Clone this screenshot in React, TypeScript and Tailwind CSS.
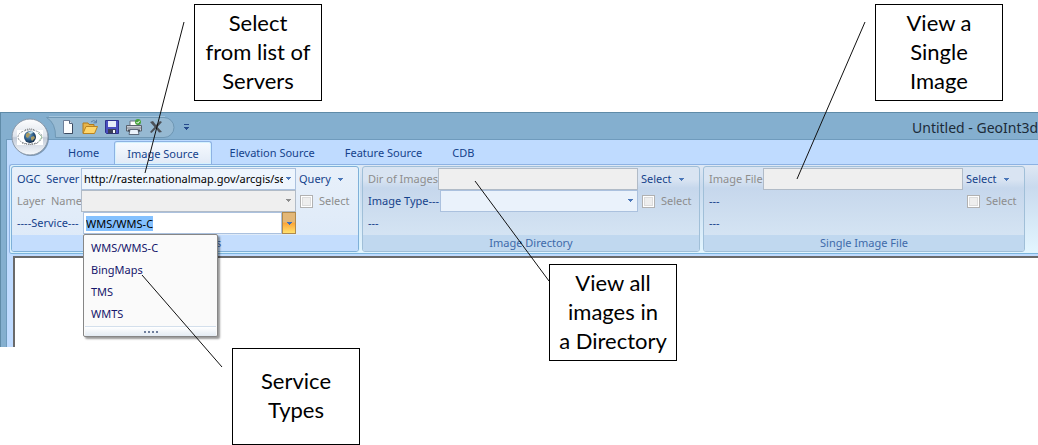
import { useEffect, useRef } from "react"
import type { ReactNode } from "react"
import clsx from "clsx"

const tabs = ["Home", "Image Source", "Elevation Source", "Feature Source", "CDB"]
const services = ["WMS/WMS-C", "BingMaps", "TMS", "WMTS"]

function Arrow({ className }: { className?: string }) {
  return (
    <svg viewBox="0 0 5 3" className={clsx("h-[3px] w-[5px] shrink-0", className)} shapeRendering="crispEdges">
      <path d="M0 0h5v1h-1v1h-1v1h-1v-1h-1v-1h-1z" fill="currentColor" />
    </svg>
  )
}

function GlobeButton() {
  return (
    <button type="button" aria-label="Application menu" className="absolute top-1 left-[9px] z-10 size-10">
      <svg viewBox="0 0 40 40" className="size-10">
        <defs>
          <linearGradient id="orb" x1="0" y1="0" x2="0" y2="1">
            <stop offset="0" stopColor="#fdfdfe" />
            <stop offset=".48" stopColor="#dfe4ec" />
            <stop offset=".52" stopColor="#c3cbd8" />
            <stop offset="1" stopColor="#f7fafd" />
          </linearGradient>
          <radialGradient id="earth" cx=".4" cy=".35" r=".7">
            <stop offset="0" stopColor="#6fa3c9" />
            <stop offset=".6" stopColor="#28557f" />
            <stop offset="1" stopColor="#10243d" />
          </radialGradient>
        </defs>
        <circle cx="21" cy="21" r="18" fill="#4b6b86" opacity=".6" />
        <circle cx="20" cy="20" r="18" fill="url(#orb)" stroke="#8997a8" />
        <rect x="7" y="13" width="26" height="15" fill="#fff" />
        <ellipse cx="20" cy="20" rx="12" ry="7" fill="none" stroke="#8d949c" strokeWidth="1" strokeDasharray="2 1" />
        <path d="M15 13q5-2 10 0M12 26q8 3 16 0" stroke="#666" fill="none" strokeDasharray="1 1" />
        <path d="M28 16l4 4-3 4" stroke="#a2c9a2" fill="none" />
        <circle cx="20" cy="20" r="6" fill="url(#earth)" />
        <path d="M16 17l3-2 2 2-2 2-1 2-2-1zM21 20l3-1 1 2-3 3-1-2z" fill="#a99a62" />
        <path d="M18 15l4-1 1 2-3 1z" fill="#bcdcec" />
      </svg>
    </button>
  )
}

function NewIcon() {
  return (
    <svg viewBox="0 0 16 16" className="size-4">
      <path d="M3.5 1.500h6l3 3v10h-9z" fill="#fdfeff" stroke="#6d7f99" />
      <path d="M9.500 1.500v3h3" fill="#cfdbe9" stroke="#52647f" />
      <path d="M12.500 5v9.500h-8" fill="none" stroke="#3c4a60" />
    </svg>
  )
}

function OpenIcon() {
  return (
    <svg viewBox="0 0 16 16" className="size-4">
      <path d="M1 14V4h5l1 1.500h5V8" fill="#e7b54a" stroke="#b07a1c" />
      <path d="M1 14.500L4 7.500h11.500l-3 7z" fill="#ffd66b" stroke="#b98321" />
      <path d="M9 3q3-3 5 0M14.500 .8v3h-3" fill="none" stroke="#5b7fa8" />
    </svg>
  )
}

function SaveIcon() {
  return (
    <svg viewBox="0 0 16 16" className="size-4">
      <path d="M1.500 1.500h13v13h-12l-1-1z" fill="#4a4fc0" stroke="#2d318c" />
      <path d="M4 2h8v6H4z" fill="#e6edf8" />
      <path d="M4 10h8v4.500H4z" fill="#3b3f58" />
      <path d="M9 11h2v3H9z" fill="#f4f6fb" />
    </svg>
  )
}

function PrintIcon() {
  return (
    <svg viewBox="0 0 16 16" className="size-4">
      <path d="M4 2h8v5H4z" fill="#fff" stroke="#6b7582" />
      <path d="M.5 6.500h15v5.500H.5z" fill="#c9ced6" stroke="#59616d" />
      <path d="M1 9h14" stroke="#81868e" />
      <path d="M4 10.500h8l1 5H3z" fill="#eaf2fb" stroke="#5d6a7c" />
      <path d="M2 10.500h2v2H2zM12 10.500h2v2h-2z" fill="#474d57" />
      <circle cx="12" cy="3" r="3" fill="#49a33c" />
      <path d="M10.500 3l1.200 1.200L13.700 1.800" fill="none" stroke="#fff" />
    </svg>
  )
}

function CloseIcon() {
  return (
    <svg viewBox="0 0 16 16" className="size-4">
      <path d="M2 3l3-1 3 4 4-4 2 1-4.500 5L14 13l-3 .5-3-4-4.500 4.500-1.500-1L6.500 8z" fill="#4c5158" />
    </svg>
  )
}

function QuickAccess() {
  return (
    <div className="relative ml-[45px] flex h-[22px] w-[130px] items-center">
      <svg viewBox="0 0 130 22" className="absolute inset-0 h-[22px] w-[130px]">
        <path
          d="M.5 1.500H118a10 10 0 0 1 0 20H9.500Q10 7 .5 1.500z"
          fill="#96b9d2"
          stroke="#6f97b4"
        />
        <path d="M3 .5H119" stroke="#a3c4dc" />
      </svg>
      <div className="relative ml-[14px] flex gap-[6px]">
        <button type="button" aria-label="New"><NewIcon /></button>
        <button type="button" aria-label="Open"><OpenIcon /></button>
        <button type="button" aria-label="Save"><SaveIcon /></button>
        <button type="button" aria-label="Print"><PrintIcon /></button>
        <button type="button" aria-label="Close"><CloseIcon /></button>
      </div>
    </div>
  )
}

function Group({ title, active, className, children }: {
  title: string
  active?: boolean
  className?: string
  children: ReactNode
}) {
  return (
    <section
      className={clsx(
        "flex shrink-0 flex-col rounded-[3px] border",
        active
          ? "border-[#7fb0d8] bg-linear-to-b from-[#e8f0fa] to-[#dce9f8] ring-1 ring-[#d8f2fd]"
          : "border-[#a0bfd8] bg-linear-to-b from-[#d9e4f2] from-15% via-[#c6d7ec] via-25% to-[#d9e8f5]",
        className,
      )}
    >
      <div className="px-[5px] pt-px">{children}</div>
      <h2
        className={clsx(
          "mt-px h-4 rounded-b-[2px] text-center leading-4",
          active ? "bg-[#c4ddfd] pl-[34px] text-[#3e6aaa]" : "bg-[#c0d8ef] text-[#3e6aaa]",
        )}
      >
        {title}
      </h2>
    </section>
  )
}

function CheckOption({ id }: { id: string }) {
  return (
    <label htmlFor={id} className="flex items-center gap-[6px] pl-1 text-[#8d8d8d]">
      <input
        id={id}
        type="checkbox"
        disabled
        className="size-[13px] appearance-none border border-[#b1b1b1] bg-[#eeeeee] shadow-[inset_0_0_0_1px_#fff,inset_0_0_0_2px_#dcdcdc]"
      />
      Select
    </label>
  )
}

function MenuButton({ children }: { children: string }) {
  return (
    <button type="button" className="flex items-center gap-[7px] pl-[3px] text-[#15428b]">
      {children}
      <Arrow className="text-[#4a76b8]" />
    </button>
  )
}

function Callout({ className, children }: { className: string; children: ReactNode }) {
  return (
    <div
      className={clsx(
        "absolute z-30 flex items-center justify-center border border-black bg-white pb-[3px] text-center font-['Lato',sans-serif] text-[22px] leading-[29px] text-black",
        className,
      )}
    >
      <p>{children}</p>
    </div>
  )
}

function ServerGroup() {
  const service = useRef<HTMLInputElement>(null)

  useEffect(() => {
    service.current?.focus()
    service.current?.select()
  }, [])

  return (
    <Group title="Servers" active className="w-[348px]">
      <div className="flex h-[22px]">
        <label htmlFor="server" className="w-16 shrink-0 leading-[22px] whitespace-pre">OGC  Server</label>
        <div className="relative w-[215px]">
          <select
            id="server"
            className="h-[22px] w-full appearance-none border border-[#abc1de] bg-[#eef5fd] pr-3 pl-[2px] text-black"
          >
            <option>http://raster.nationalmap.gov/arcgis/services</option>
          </select>
          <Arrow className="absolute top-[9px] right-[5px] text-[#4a76b8]" />
        </div>
        <MenuButton>Query</MenuButton>
      </div>
      <div className="flex h-[22px]">
        <label htmlFor="layer" className="w-16 shrink-0 leading-[22px] whitespace-pre text-[#8d8d8d]">Layer  Name</label>
        <div className="relative w-[215px]">
          <select
            id="layer"
            disabled
            className="h-[22px] w-full appearance-none border border-[#b1bbc7] bg-[#efefef] opacity-100"
          />
          <Arrow className="absolute top-[9px] right-[5px] text-[#8d8d8d]" />
        </div>
        <CheckOption id="layer-select" />
      </div>
      <div className="flex h-[22px]">
        <label htmlFor="service" className="w-[66px] shrink-0 leading-[22px]">----Service---</label>
        <div className="relative flex w-[213px]">
          <input
            ref={service}
            id="service"
            defaultValue="WMS/WMS-C"
            className="h-[22px] min-w-0 flex-1 border border-[#abc1de] bg-white pl-[2px] leading-[14px] text-black outline-none selection:bg-[#84c1ff] selection:text-black"
          />
          <button
            type="button"
            aria-label="Show services"
            className="flex h-[22px] w-[14px] items-center justify-center border border-[#b0894b] bg-linear-to-b from-[#e3b777] from-45% via-[#fba436] via-50% to-[#ffe16d] text-[#3f6fb8]"
          >
            <Arrow />
          </button>
          <ul className="absolute top-[22px] left-0 z-20 w-[135px] rounded-[2px] border border-[#868686] bg-[#fafafa] px-px pt-[2px] text-[#15156b] shadow-[2px_2px_2px_#0006]">
            {services.map((name) => (
              <li key={name} className="h-[22px] pl-[6px] leading-[22px]">{name}</li>
            ))}
            <li className="mt-px flex h-[10px] items-center justify-center gap-[2px] border-t border-[#d3dfec] bg-linear-to-b from-white to-[#e3ebf3]">
              {[0, 1, 2, 3].map((dot) => (
                <span key={dot} className="size-[2px] bg-[#6f7f9d]" />
              ))}
            </li>
          </ul>
        </div>
      </div>
    </Group>
  )
}

function DirectoryGroup() {
  return (
    <Group title="Image Directory" className="w-[338px]">
      <div className="flex h-[22px]">
        <label htmlFor="dir" className="w-[70px] shrink-0 leading-[22px] text-[#8d8d8d]">Dir of Images</label>
        <input id="dir" disabled className="h-[22px] w-[200px] border border-[#b1bbc7] bg-[#efefef]" />
        <MenuButton>Select</MenuButton>
      </div>
      <div className="flex h-[22px]">
        <label htmlFor="type" className="w-[72px] shrink-0 leading-[22px]">Image Type---</label>
        <div className="relative w-[198px]">
          <select id="type" className="h-[22px] w-full appearance-none border border-[#abc1de] bg-[#eaf2fb]" />
          <Arrow className="absolute top-[9px] right-[5px] text-[#4a76b8]" />
        </div>
        <CheckOption id="dir-select" />
      </div>
      <p className="h-[22px] leading-[22px]">---</p>
    </Group>
  )
}

function FileGroup() {
  return (
    <Group title="Single Image File" className="w-[322px]">
      <div className="flex h-[22px]">
        <label htmlFor="file" className="w-[54px] shrink-0 leading-[22px] text-[#8d8d8d]">Image File</label>
        <input id="file" disabled className="h-[22px] w-[200px] border border-[#b1bbc7] bg-[#efefef]" />
        <MenuButton>Select</MenuButton>
      </div>
      <div className="flex h-[22px] leading-[22px]">
        <p className="w-[254px]">---</p>
        <CheckOption id="file-select" />
      </div>
      <p className="h-[22px] leading-[22px]">---</p>
    </Group>
  )
}

export default function App() {
  return (
    <div className="relative min-h-screen overflow-hidden bg-white pt-28 font-['Noto_Sans',sans-serif] text-[11px] text-[#15428b]">
      <main className="relative border-t border-l border-[#5f8ba8] bg-[#84afcf]">
        <GlobeButton />

        {/* Title bar */}
        <header className="flex h-[26px] items-start pt-[3px]">
          <QuickAccess />
          <button type="button" aria-label="Customize toolbar" className="mt-2 ml-2 flex flex-col items-center gap-[2px] text-[#254a8c]">
            <span className="h-px w-[5px] bg-[#254a8c]" />
            <Arrow />
          </button>
          <h1 className="ml-auto w-[126px] overflow-hidden text-sm leading-6 whitespace-nowrap text-[#1c2b38]">
            Untitled - GeoInt3d
          </h1>
        </header>

        <div className="ml-[5px] border-t border-l border-[#6f9bbd] bg-[#bfdbff]">
          {/* Tabs */}
          <nav className="flex h-6 items-end pl-[46px]">
            {tabs.map((tab) => (
              <a
                key={tab}
                href="#"
                className={clsx(
                  "h-[23px] leading-[23px] whitespace-nowrap",
                  tab === "Image Source"
                    ? "z-10 mr-[3px] rounded-t-[3px] border border-b-0 border-[#8db2e3] bg-linear-to-b from-[#f6faff] to-[#e1eaf6] px-3 shadow-[inset_0_0_0_1px_#d5f2fe]"
                    : "px-[15px]",
                )}
              >
                {tab}
              </a>
            ))}
          </nav>

          {/* Ribbon */}
          <div className="ml-[2px] flex gap-[3px] rounded-l-[3px] border-y border-l border-[#8db2e3] border-b-[#7cb5dc] bg-linear-to-b from-[#dfe8f4] via-[#c9daee] via-25% to-[#e3f6ff] py-px pl-px">
            <ServerGroup />
            <DirectoryGroup />
            <FileGroup />
          </div>

          <div className="mt-[2px] ml-[6px] h-[91px] border-t-2 border-l-2 border-[#6a6a6a] bg-white" />
        </div>
      </main>

      {/* Annotations */}
      <svg className="pointer-events-none absolute inset-0 z-30 h-full w-full" stroke="#111" fill="none">
        <path d="M184 22L145 173M865 22L797 179M475 181L549 281M142 275L222 367" />
      </svg>
      <Callout className="top-1 left-[194px] h-[97px] w-32">Select<br />from list of<br />Servers</Callout>
      <Callout className="top-1 left-[875px] h-[97px] w-32">View a<br />Single<br />Image</Callout>
      <Callout className="top-[264px] left-[549px] h-[97px] w-32">View all<br />images in<br />a Directory</Callout>
      <Callout className="top-[348px] left-[232px] h-[97px] w-32">Service<br />Types</Callout>
    </div>
  )
}
